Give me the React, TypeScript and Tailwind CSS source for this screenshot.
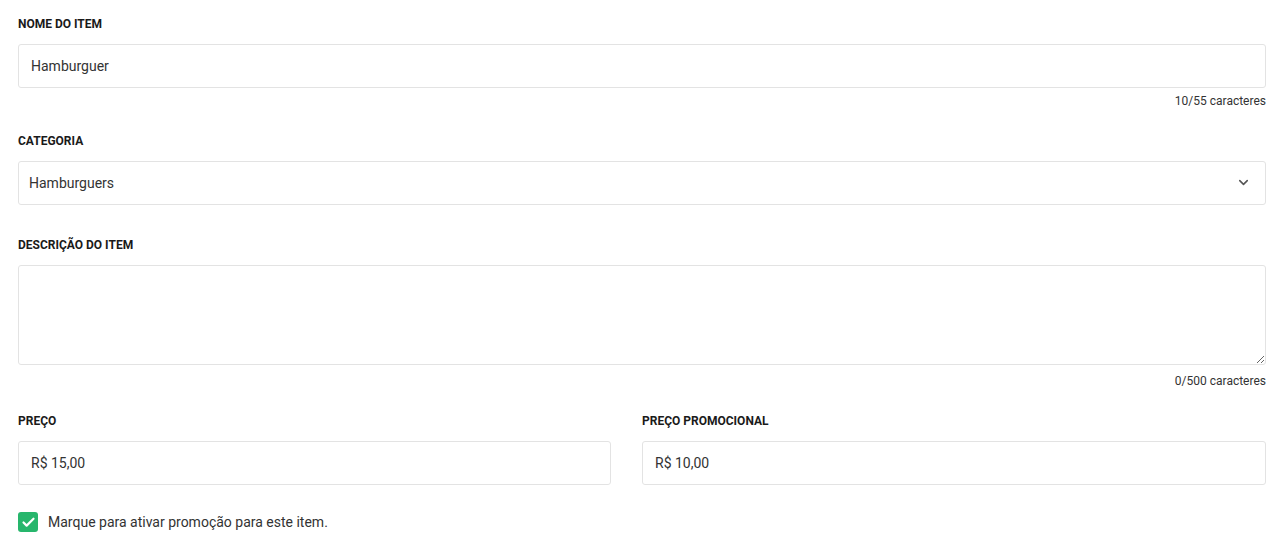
import { ChevronDown, Check } from 'lucide-react'

const label = 'block text-[12px] font-bold leading-[14px] text-[#1a1a1a]'
const field =
  'block h-[44px] w-full rounded-[3px] border border-[#e3e3e3] bg-white px-3 text-[14px] text-[#333] outline-none'

export default function App() {
  return (
    <div className="min-h-[549px] bg-white pl-[18px] pr-[11px] pt-[17px] font-['Roboto',sans-serif]">
      <label className={label}>NOME DO ITEM</label>
      <input className={`${field} mt-[13px]`} defaultValue="Hamburguer" />
      <p className="mt-[6px] text-right text-[12px] leading-[14px] text-[#333]">10/55 caracteres</p>

      <label className={`${label} mt-[26px]`}>CATEGORIA</label>
      <div className="relative mt-[13px]">
        <select className={`${field} appearance-none pl-[10px]`} defaultValue="Hamburguers">
          <option>Hamburguers</option>
        </select>
        <ChevronDown
          size={15}
          strokeWidth={2.5}
          className="pointer-events-none absolute right-[15px] top-[14px] text-[#555]"
        />
      </div>

      <label className={`${label} mt-[33px]`}>DESCRIÇÃO DO ITEM</label>
      <textarea className="mt-[13px] block h-[100px] w-full rounded-[3px] border border-[#e3e3e3] bg-white px-3 py-2 text-[14px] text-[#333] outline-none" />
      <p className="mt-[9px] text-right text-[12px] leading-[14px] text-[#333]">0/500 caracteres</p>

      <div className="mt-[26px] grid grid-cols-[593px_1fr] gap-[31px]">
        <div>
          <label className={label}>PREÇO</label>
          <input className={`${field} mt-[13px]`} defaultValue="R$ 15,00" />
        </div>
        <div>
          <label className={label}>PREÇO PROMOCIONAL</label>
          <input className={`${field} mt-[13px]`} defaultValue="R$ 10,00" />
        </div>
      </div>

      <label className="mt-[27px] flex items-center gap-[10px] text-[14px] leading-[20px] text-[#333]">
        <span className="flex h-[20px] w-[20px] items-center justify-center rounded-[3px] bg-[#27b66c]">
          <Check size={15} strokeWidth={3.5} className="text-white" />
        </span>
        Marque para ativar promoção para este item.
      </label>
    </div>
  )
}
